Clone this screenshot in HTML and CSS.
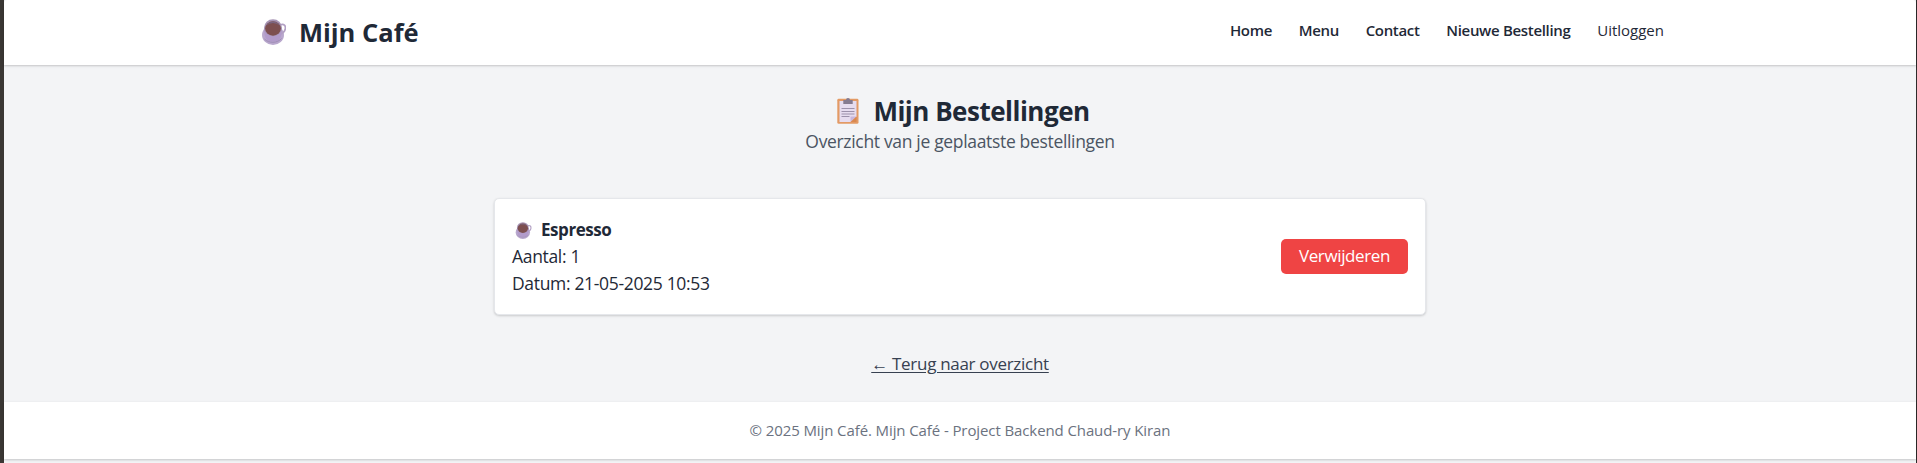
FILE: index.html
```html
<!DOCTYPE html>
<html lang="nl">
<head>
<meta charset="utf-8">
<title>Mijn Café</title>
<link rel="stylesheet" href="styles.css">
</head>
<body>
<svg class="defs" width="0" height="0" aria-hidden="true">
  <symbol id="cup" viewBox="0 0 24 26">
    <ellipse cx="11" cy="16" rx="11" ry="10" fill="#b9a8cd"/>
    <path d="M18 6c4-2 6 1 5.300 4S20 15 18 14.500" fill="none" stroke="#b3a1c4" stroke-width="1.800"/>
    <path d="M2 9c0 4 .5 9 3 12c2 2 10 2 12 0c2.500-3 3-8 3-12z" fill="#b29bcb"/>
    <path d="M2.500 20c4 4.500 13 4.500 17-.5" fill="none" stroke="#9f8db6"/>
    <ellipse cx="11" cy="8.700" rx="9" ry="8.500" fill="#a795b5"/>
    <ellipse cx="11" cy="9.500" rx="7.900" ry="7.200" fill="#7d4f50"/>
    <path d="M4 6.500Q11-1.500 18 6.500Q11 1.500 4 6.500z" fill="#79647f"/>
  </symbol>
  <symbol id="clipboard" viewBox="0 0 22 26">
    <rect x=".3" y=".8" width="21.200" height="25" rx="1.400" fill="#e39a65"/>
    <path d="M2.500 3h17v15.500l-5.500 5.500h-11.500z" fill="#e6dcef"/>
    <path d="M13.500 24v-5.500h6z" fill="#c9b6dc"/>
    <path d="M19.500 18.500V24h-6z" fill="#d98850"/>
    <path d="M6.300 2h2.700a2 2 0 0 1 4 0h2.700v4H6.300z" fill="#857b90"/>
    <path d="M4.500 10.500h13M4.500 13.500h13M4.500 16h13M4.500 18.500h8" stroke="#9c91ab"/>
  </symbol>
</svg>
<div class="page">
  <header class="header">
    <div class="header-inner">
      <a class="brand"><svg class="brand-icon"><use href="#cup"/></svg><span>Mijn Café</span></a>
      <nav class="nav">
        <a>Home</a><a>Menu</a><a>Contact</a><a>Nieuwe Bestelling</a><a class="logout">Uitloggen</a>
      </nav>
    </div>
  </header>
  <main class="main">
    <h1 class="title"><svg class="title-icon"><use href="#clipboard"/></svg><span>Mijn Bestellingen</span></h1>
    <p class="subtitle">Overzicht van je geplaatste bestellingen</p>
    <section class="card">
      <div class="details">
        <h2 class="product"><svg class="product-icon"><use href="#cup"/></svg><span>Espresso</span></h2>
        <p>Aantal: 1</p>
        <p>Datum: 21-05-2025 10:53</p>
      </div>
      <button class="delete">Verwijderen</button>
    </section>
    <a class="back">← Terug naar overzicht</a>
  </main>
  <footer class="footer"><p class="copyright">© 2025 Mijn Café. Mijn Café - Project Backend Chaud-ry Kiran</p></footer>
</div>
</body>
</html>
```
FILE: styles.css
```css
* { box-sizing: border-box; margin: 0; padding: 0; }
body {
  height: 463px;
  overflow: hidden;
  background: #2d2b2a;
  font-family: "Open Sans", "Noto Sans", sans-serif;
  font-size: 17.5px;
  letter-spacing: -0.33px;
  line-height: 26.5px;
  color: #1f2937;
  white-space: nowrap;
}
svg { display: block; flex: none; }
.defs { position: absolute; }
.page {
  height: 463px;
  border-left: 4px solid #3a3734;
  margin-right: 1px;
  background: #f3f4f6;
  display: flex;
  flex-direction: column;
}
.header {
  height: 65px;
  flex: none;
  background: #fff;
  border-radius: 3px 3px 0 0;
  box-shadow: 0 1px 3px rgba(0,0,0,.1), 0 1px 2px rgba(0,0,0,.1);
}
.header-inner {
  display: flex;
  justify-content: space-between;
  margin: 0 252px 0 258px;
}
.brand { display: flex; gap: 13px; padding-top: 19px; font-size: 25.5px; font-weight: 700; letter-spacing: 0; }
.brand span { line-height: 26px; }
.brand-icon { width: 24px; height: 26px; }
.nav { display: flex; gap: 26.7px; padding-top: 17px; font-size: 15px; font-weight: 570; letter-spacing: -0.32px; }
.logout { font-weight: 400; letter-spacing: 0; }
.main { height: 337px; flex: none; display: flex; flex-direction: column; align-items: center; }
.title { display: flex; gap: 14px; padding: 33px 0 0 7px; font-size: 26px; line-height: 26px; letter-spacing: -0.5px; }
.title-icon { width: 22px; height: 26px; }
.subtitle { margin-top: 4px; color: #4b5563; }
.card {
  width: 932px;
  height: 117px;
  margin-top: 43px;
  padding: 0 17px;
  display: flex;
  align-items: center;
  justify-content: space-between;
  background: #fff;
  border: 1px solid #e5e7eb;
  border-radius: 5px;
  box-shadow: 0 1px 3px rgba(0,0,0,.1), 0 1px 2px rgba(0,0,0,.08);
}
.product { display: flex; align-items: center; gap: 9px; padding: 1px 0 0 3px; font-size: 17px; line-height: 26px; letter-spacing: -0.45px; }
.product-icon { width: 17px; height: 17px; }
.delete {
  width: 127px;
  height: 35px;
  border: 0;
  border-radius: 5px;
  background: #ef4444;
  color: #fff;
  font: inherit;
  font-size: 17px;
  letter-spacing: -0.38px;
}
.back { margin-top: 36px; color: #374151; font-size: 17px; letter-spacing: -0.3px; text-decoration: underline; text-underline-offset: 2px; text-decoration-thickness: 1px; }
.footer {
  height: 57px;
  flex: none;
  display: flex;
  justify-content: center;
  align-items: center;
  background: #fff;
  color: #6b7280;
  font-size: 15px;
  letter-spacing: -0.1px;
  box-shadow: 0 1px 3px rgba(0,0,0,.1), 0 1px 2px rgba(0,0,0,.1);
}
```
